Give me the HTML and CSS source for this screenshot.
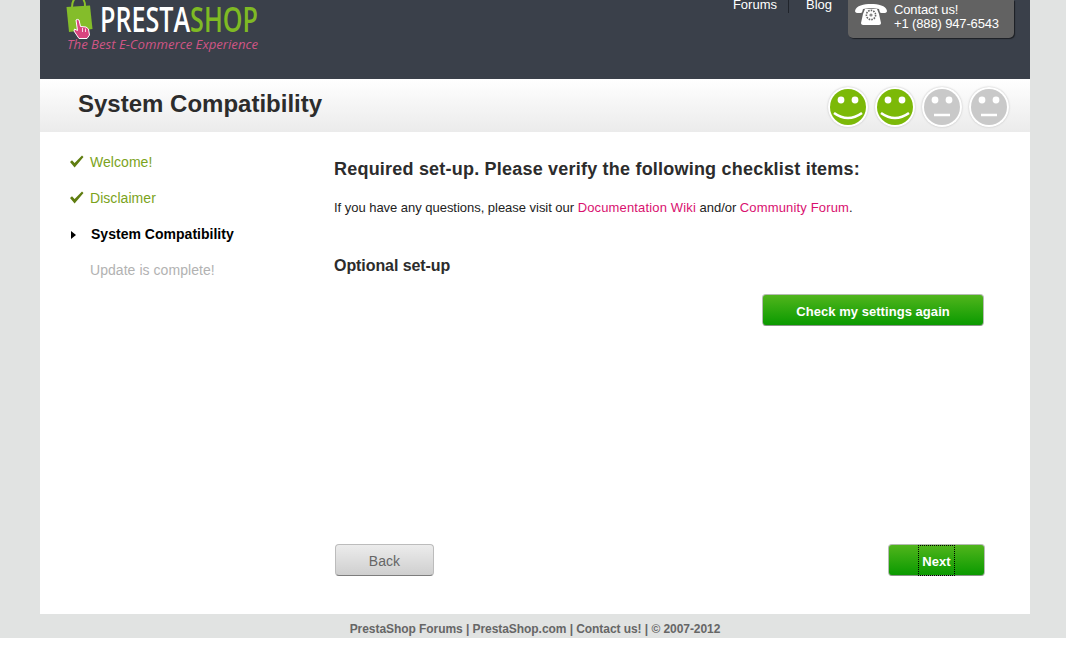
FILE: index.html
```html
<!DOCTYPE html>
<html lang="en">
<head>
<meta charset="utf-8">
<title>PrestaShop - System Compatibility</title>
<link rel="stylesheet" href="styles.css">
</head>
<body>
<div class="page">
  <div class="wrap">
    <header class="header">
      <svg class="logo" width="200" height="54" viewBox="0 0 200 54">
        <path d="M6 7 C6 1 9 -3 12.500 -3 C16 -3 19 0 19 6" fill="none" stroke="#8cc12a" stroke-width="2"/>
        <path d="M0.500 7 L24 5.500 L26.500 29 L3 32 Z" fill="#84bd2a"/>
        <path d="M10 20 Q11.500 18.800 13 20 L14.500 26.500 L20 27 L22.500 29 L23.500 35 L21 38.500 L13 38.500 L8 31 L8.500 29 L11.500 30.500 Z" fill="#d8457f" stroke="#fff" stroke-width="1"/>
        <path d="M16.500 28 V32 M19.500 28.500 V32" stroke="#fff" stroke-width="0.8" fill="none"/>
        <text class="logo-word" x="34" y="32" textLength="158" lengthAdjust="spacingAndGlyphs">PRESTA<tspan class="logo-shop">SHOP</tspan></text>
        <text class="logo-tag" x="1" y="49" textLength="191" lengthAdjust="spacingAndGlyphs">The Best E-Commerce Experience</text>
      </svg>
      <nav class="topnav">
        <a class="topnav-link topnav-sep">Forums</a>
        <a class="topnav-link">Blog</a>
      </nav>
      <div class="contact">
        <svg class="phone" width="32" height="22" viewBox="0 0 32 22">
          <path d="M0 7 C1 1.500 9 0 16 0 C23 0 31 1.500 32 7 C32 9.500 27 9.500 25 8.500 L24 5 C20 4 12 4 8 5 L7 8.500 C5 9.500 0 9.500 0 7 Z" fill="#fff"/>
          <path d="M10 5 L22 5 L24 10 L26 19 C26 20 25 21 24 21 L8 21 C7 21 6 20 6 19 L8 10 Z" fill="#fff"/>
          <circle cx="16" cy="11" r="4.600" fill="#fff" stroke="#666" stroke-width="1.600" stroke-dasharray="1.600 1"/>
          <circle cx="16" cy="11" r="1.600" fill="#888"/>
        </svg>
        <div class="contact-text">Contact us!<br>+1 (888) 947-6543</div>
      </div>
    </header>
    <div class="titlebar">
      <h1 class="title">System Compatibility</h1>
      <div class="smileys">
        <svg class="smiley" viewBox="0 0 40 40"><circle cx="20" cy="20" r="18" class="face-on"/><circle cx="13" cy="13" r="3.400" fill="#fff"/><circle cx="27" cy="13" r="3.400" fill="#fff"/><path d="M6 26 Q20 36 34 26" class="mouth"/></svg>
        <svg class="smiley" viewBox="0 0 40 40"><circle cx="20" cy="20" r="18" class="face-on"/><circle cx="13" cy="13" r="3.400" fill="#fff"/><circle cx="27" cy="13" r="3.400" fill="#fff"/><path d="M6 26 Q20 36 34 26" class="mouth"/></svg>
        <svg class="smiley" viewBox="0 0 40 40"><circle cx="20" cy="20" r="18" class="face-off"/><circle cx="13" cy="13" r="3.400" fill="#fff"/><circle cx="27" cy="13" r="3.400" fill="#fff"/><path d="M12 28 H28" class="mouth"/></svg>
        <svg class="smiley" viewBox="0 0 40 40"><circle cx="20" cy="20" r="18" class="face-off"/><circle cx="13" cy="13" r="3.400" fill="#fff"/><circle cx="27" cy="13" r="3.400" fill="#fff"/><path d="M12 28 H28" class="mouth"/></svg>
      </div>
    </div>
    <main class="main">
      <ul class="steps">
        <li class="step step-done"><svg class="check" width="15" height="13" viewBox="0 0 15 13"><path d="M1 7 L3 5.200 L5.600 8 L13 0.500 L14.500 2 L5.600 12.500 Z" fill="#5f7d10"/></svg>Welcome!</li>
        <li class="step step-done"><svg class="check" width="15" height="13" viewBox="0 0 15 13"><path d="M1 7 L3 5.200 L5.600 8 L13 0.500 L14.500 2 L5.600 12.500 Z" fill="#5f7d10"/></svg>Disclaimer</li>
        <li class="step step-current"><span class="arrow"></span>System Compatibility</li>
        <li class="step step-todo">Update is complete!</li>
      </ul>
      <section class="content">
        <h2 class="heading">Required set-up. Please verify the following checklist items:</h2>
        <p class="intro">If you have any questions, please visit our <a class="pink">Documentation Wiki</a> and/or <a class="pink">Community Forum</a>.</p>
        <h3 class="subheading">Optional set-up</h3>
        <div class="recheck"><a class="btn btn-green btn-wide">Check my settings again</a></div>
        <div class="actions">
          <a class="btn btn-gray btn-back">Back</a>
          <a class="btn btn-green btn-next"><span class="focus">Next</span></a>
        </div>
      </section>
    </main>
    <footer class="footer">PrestaShop Forums | PrestaShop.com | Contact us! | © 2007-2012</footer>
  </div>
</div>
</body>
</html>
```

FILE: styles.css
```css
* { box-sizing: border-box; }
html, body { margin: 0; padding: 0; background: #fff; }
body { font-family: "Liberation Sans", Arial, sans-serif; overflow: hidden; }
.page { background: #e1e3e2; height: 638px; padding: 0 36px 0 40px; }
.wrap { width: 990px; height: 638px; display: flex; flex-direction: column; }

.header { height: 79px; flex: none; background: #3a404a; display: flex; align-items: flex-start; overflow: hidden; }
.logo { flex: none; margin-left: 26px; }
.logo-word { font-family: "Open Sans", sans-serif; font-size: 35px; font-weight: 600; fill: #fff; }
.logo-shop { fill: #7fba24; }
.logo-tag { font-family: "Open Sans", sans-serif; font-style: italic; font-size: 13px; fill: #cf5585; }
.topnav { margin-left: auto; display: flex; margin-top: -3px; font-size: 13px; line-height: 16px; color: #fff; }
.topnav-link { color: #fff; }
.topnav-link:last-child { padding-left: 17px; }
.topnav-link:first-child { padding-right: 11px; }
.topnav-sep { border-right: 1px solid #20242b; }
.contact { width: 166px; height: 38px; margin: 0 16px; background: #626262; border-radius: 0 0 5px 5px; box-shadow: 1px 1px 1px #1c1f24; display: flex; align-items: flex-start; padding: 3px 0 0 7px; color: #fff; }
.phone { flex: none; margin-right: 7px; margin-top: 1px; }
.contact-text { font-size: 13px; line-height: 14px; letter-spacing: -0.14px; white-space: nowrap; }

.titlebar { height: 53px; flex: none; background: linear-gradient(#fff, #ebebeb); display: flex; align-items: center; justify-content: space-between; padding: 0 21px 0 38px; }
.title { margin: 0 0 4px; font-size: 24px; font-weight: bold; color: #2c2c2c; }
.smileys { display: flex; gap: 7px; margin-top: 3px; }
.smiley { width: 40px; height: 40px; display: block; border-radius: 50%; background: #fff; box-shadow: 0 0 2px #bbb; }
.face-on { fill: #7cb908; }
.face-off { fill: #c9c9c9; }
.mouth { fill: none; stroke: #fff; stroke-width: 2.6; }

.main { flex: 1; background: #fff; display: flex; min-height: 0; }
.steps { list-style: none; margin: 12px 0 0; padding: 0; width: 294px; flex: none; font-size: 14px; }
.step { height: 36px; line-height: 36px; padding-left: 50px; position: relative; }
.check { position: absolute; left: 29px; top: 11px; }
.step-done { color: #7ba31c; letter-spacing: 0.05px; }
.step-current { color: #000; font-weight: bold; padding-left: 51px; letter-spacing: 0.02px; }
.arrow { position: absolute; left: 31px; top: 14.500px; width: 0; height: 0; border-left: 5px solid #000; border-top: 4px solid transparent; border-bottom: 4px solid transparent; }
.step-todo { color: #b2b2b2; letter-spacing: 0.05px; }

.content { flex: 1; display: flex; flex-direction: column; padding-right: 45px; }
.heading { margin: 26px 0 0; font-size: 18px; line-height: 22px; font-weight: bold; letter-spacing: 0.21px; color: #2c2c2c; }
.intro { margin: 20px 0 0; font-size: 13px; line-height: 16px; color: #222; letter-spacing: -0.03px; }
.pink { color: #d9116f; letter-spacing: 0.15px; }
.subheading { margin: 40px 0 0; font-size: 16px; line-height: 20px; font-weight: bold; letter-spacing: -0.07px; color: #2c2c2c; }
.recheck { display: flex; justify-content: flex-end; margin-top: 18px; padding-right: 1px; }
.actions { display: flex; justify-content: space-between; margin-top: 218px; padding-left: 1px; }

.btn { display: flex; justify-content: center; align-items: center; height: 32px; border-radius: 4px; font-size: 13px; font-weight: bold; letter-spacing: 0.05px; }
.btn-green { background: linear-gradient(#51b51c, #0a9a00); color: #fff; border: 1px solid #b5bcb2; border-bottom-color: #8a9488; }
.btn-gray { background: linear-gradient(#ececec, #cfcfcf); color: #666; border: 1px solid #bcbcbc; border-bottom-color: #7d7d7d; }
.btn-wide { width: 222px; padding-top: 2px; }
.btn-back { width: 99px; font-size: 14px; font-weight: normal; padding-top: 2px; }
.btn-next { width: 97px; }
.focus { outline: 1px dotted #000; height: 29px; line-height: 31px; width: 35px; text-align: center; }

.footer { height: 24px; flex: none; text-align: center; font-size: 12px; font-weight: bold; line-height: 30px; letter-spacing: -0.06px; color: #666; }
```
